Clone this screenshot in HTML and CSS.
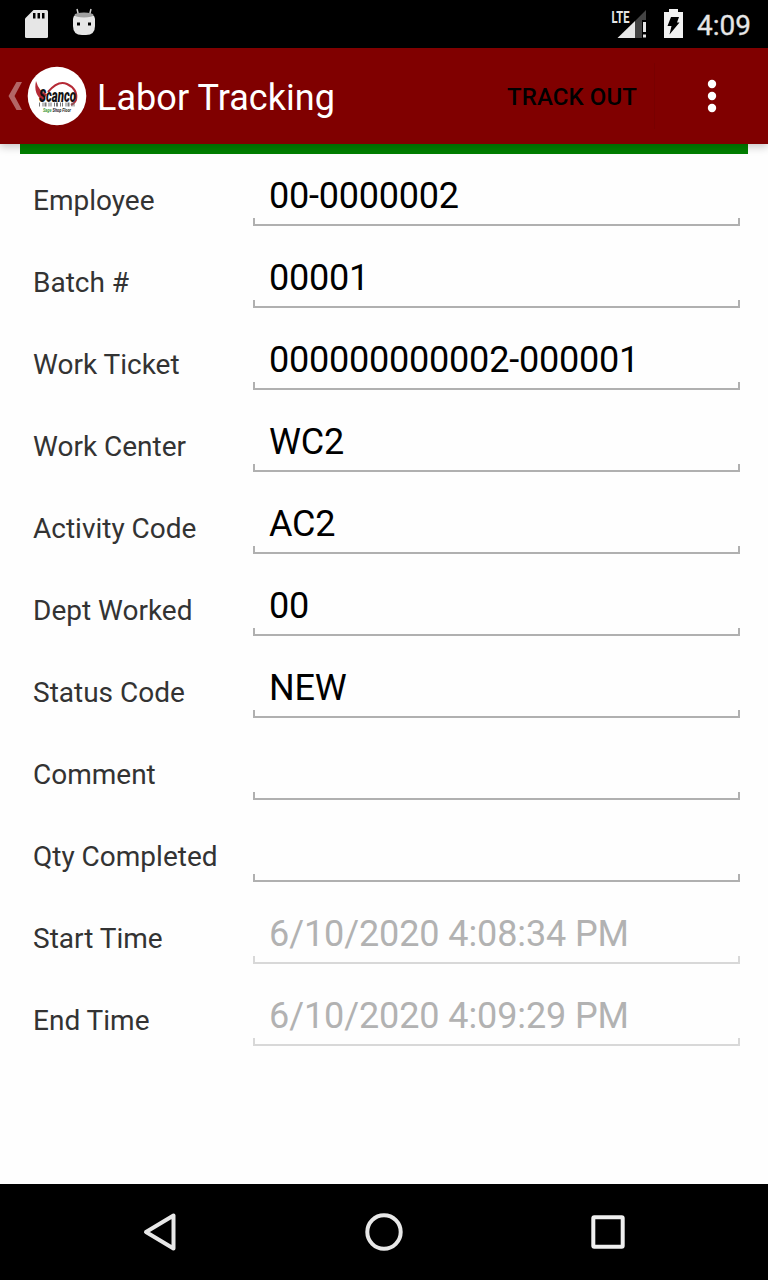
FILE: index.html
```html
<!DOCTYPE html>
<html lang="en">
<head>
    <meta charset="UTF-8">
    <meta name="viewport" content="width=device-width, initial-scale=1.0">
    <title>Labor Tracking</title>
    <link rel="stylesheet" href="styles.css">
</head>
<body>

    <div class="status-bar">
        <div class="status-left">
            <svg width="24" height="30" viewBox="0 0 24 30">
                <path fill="#e6e6e6" d="M8.500 1H21.500Q23 1 23 2.500V27.500Q23 29 21.500 29H1.500Q0 29 0 27.500V9.500Z"/>
                <path fill="#000" d="M8 4h2.500v5.500H8zM12.500 4H15v5.500h-2.500zM17 4h2.500v5.500H17z"/>
            </svg>
            <svg width="24" height="30" viewBox="0 0 24 30">
                <path d="M5 0l1.500 6M19 0l-1.500 6" stroke="#cfcfcf" stroke-width="1.500"/>
                <path fill="#e6e6e6" d="M1 10Q1 4 12 4T23 10V17Q23 26 14 26H10Q1 26 1 17Z"/>
                <ellipse cx="12" cy="6" rx="9.500" ry="2.500" fill="#a0a0a0"/>
                <path fill="#000" d="M5 13.500h3v3H5zM16 13.500h3v3h-3z"/>
            </svg>
        </div>
        <div class="status-right">
            <svg width="38" height="30" viewBox="0 0 38 30">
                <path fill="#444" d="M35 1V11H31V29H24V12Z"/>
                <path fill="#e6e6e6" d="M6.500 29L24 12V29Z"/>
                <path fill="#e6e6e6" d="M32 13h3v10h-3zM32 25.500h3v3h-3z"/>
                <text class="lte" x="0.500" y="13.500" textLength="18" lengthAdjust="spacingAndGlyphs">LTE</text>
            </svg>
            <svg class="battery" width="19" height="30" viewBox="0 0 19 30">
                <path fill="#f2f2f2" d="M5 0h9v3h5v26H0V3h5z"/>
                <path fill="#000" d="M7 8h8l-2 5.500h2.500L5.500 25.500l2-8.500H3.500z"/>
            </svg>
            <span class="clock">4:09</span>
        </div>
    </div>

    <div class="app-bar">
        <svg class="back" width="14" height="30" viewBox="0 0 14 30">
            <path fill="#b36666" d="M8.500 1H14L6.500 15L14 29H8.500L0.500 15Z"/>
        </svg>
        <svg class="logo" width="60" height="60" viewBox="0 0 60 60">
            <circle cx="30" cy="30" r="29.300" fill="#fff"/>
            <path fill="#b52a36" d="M9 15Q12 26 20 28L16 35Q6 28 9 15Z"/>
            <path d="M21 26Q31 14 40 18Q51 23 49 34Q48 37 44 39" fill="none" stroke="#b52a36" stroke-width="2"/>
            <text class="logo-name" x="12" y="35.500" textLength="37" lengthAdjust="spacingAndGlyphs">Scanco</text>
            <path d="M12 38.500H49" stroke="#777" stroke-width="4" stroke-dasharray="1 2.500 1 1 2 2 1 1"/>
            <text class="logo-tag" x="16" y="45.500" textLength="28" lengthAdjust="spacingAndGlyphs"><tspan fill="#3b9a3b">Sage</tspan> Shop Floor</text>
        </svg>
        <h1 class="title">Labor Tracking</h1>
        <div class="action">TRACK OUT</div>
        <svg class="menu" width="10" height="34" viewBox="0 0 10 34">
            <circle cx="5" cy="5" r="4.200" fill="#fff"/>
            <circle cx="5" cy="17" r="4.200" fill="#fff"/>
            <circle cx="5" cy="29" r="4.200" fill="#fff"/>
        </svg>
    </div>

    <div class="content">
        <div class="green-line"></div>
        <div class="row">
            <div class="label">Employee</div>
            <div class="field">00-0000002</div>
        </div>
        <div class="row">
            <div class="label">Batch #</div>
            <div class="field">00001</div>
        </div>
        <div class="row">
            <div class="label">Work Ticket</div>
            <div class="field">000000000002-000001</div>
        </div>
        <div class="row">
            <div class="label">Work Center</div>
            <div class="field">WC2</div>
        </div>
        <div class="row">
            <div class="label">Activity Code</div>
            <div class="field">AC2</div>
        </div>
        <div class="row">
            <div class="label">Dept Worked</div>
            <div class="field">00</div>
        </div>
        <div class="row">
            <div class="label">Status Code</div>
            <div class="field">NEW</div>
        </div>
        <div class="row">
            <div class="label">Comment</div>
            <div class="field"></div>
        </div>
        <div class="row">
            <div class="label">Qty Completed</div>
            <div class="field"></div>
        </div>
        <div class="row">
            <div class="label">Start Time</div>
            <div class="field disabled">6/10/2020 4:08:34 PM</div>
        </div>
        <div class="row">
            <div class="label">End Time</div>
            <div class="field disabled">6/10/2020 4:09:29 PM</div>
        </div>
    </div>

    <div class="nav-bar">
        <svg width="40" height="40" viewBox="0 0 40 40">
            <path d="M6 20L33.500 3.500V36.500Z" fill="none" stroke="#e8e8e8" stroke-width="4" stroke-linejoin="round"/>
        </svg>
        <svg width="40" height="40" viewBox="0 0 40 40">
            <circle cx="20" cy="20" r="16.700" fill="none" stroke="#e8e8e8" stroke-width="4"/>
        </svg>
        <svg width="40" height="40" viewBox="0 0 40 40">
            <rect x="5.300" y="5.300" width="29.400" height="29.400" rx="1" fill="none" stroke="#f0f0f0" stroke-width="4"/>
        </svg>
    </div>

</body>
</html>
```
FILE: styles.css
```css
body {
    margin: 0;
    height: 1280px;
    display: flex;
    flex-direction: column;
    font-family: Roboto, sans-serif;
    background-color: #fefefe;
    overflow: hidden;
}

svg {
    display: block;
    flex: none;
    overflow: visible;
}

.status-bar {
    height: 48px;
    display: flex;
    justify-content: space-between;
    align-items: center;
    padding: 0 17px 0 25px;
    box-sizing: border-box;
    background-color: #000;
}

.status-left, .status-right {
    display: flex;
    align-items: center;
}

.status-left {
    gap: 23px;
}

.lte {
    font-size: 17px;
    font-weight: 700;
    fill: #e6e6e6;
}

.battery {
    margin-left: 15px;
}

.clock {
    margin-left: 14px;
    font-size: 28px;
    line-height: 48px;
    font-weight: 400;
    color: #e6e6e6;
    padding-top: 3px;
    -webkit-text-stroke: 0.3px #e6e6e6;
}

.app-bar {
    position: relative;
    height: 96px;
    display: flex;
    align-items: center;
    box-sizing: border-box;
    padding: 0 51px 0 8px;
    background-color: #800000;
    box-shadow: 0 3px 8px rgba(0,0,0,0.22);
}

.logo {
    margin-left: 5px;
}

.logo-name {
    font-size: 18px;
    font-weight: 900;
    font-style: italic;
    fill: #111;
}

.logo-tag {
    font-size: 5px;
    font-weight: bold;
    font-style: italic;
    fill: #222;
}

.title {
    margin: 3px 0 0 10px;
    font-size: 36px;
    font-weight: 400;
    letter-spacing: 0.05px;
    color: #fff;
}

.action {
    margin-left: auto;
    padding: 2px 17px 0 0;
    border-right: 1px solid #780000;
    font-size: 24px;
    line-height: 64px;
    font-weight: 500;
    letter-spacing: 0.1px;
    color: #000;
}

.menu {
    margin-left: 52px;
}

.content {
    flex: 1;
}

.green-line {
    height: 10px;
    margin: 0 20px;
    background-color: #008000;
}

.row {
    height: 72px;
    margin-bottom: 10px;
    display: flex;
    padding: 0 28px 0 33px;
}

.label {
    width: 220px;
    padding-top: 30px;
    font-size: 28px;
    line-height: 33px;
    color: #333;
}

/* bottom line with a short tick at each end */
.field {
    flex: 1;
    box-sizing: border-box;
    padding: 21px 0 0 16px;
    font-size: 36px;
    line-height: 42px;
    letter-spacing: -0.22px;
    color: #000;
    background-image: linear-gradient(#b0b0b0, #b0b0b0), linear-gradient(#b0b0b0, #b0b0b0), linear-gradient(#b0b0b0, #b0b0b0);
    background-size: 100% 2px, 2px 8px, 2px 8px;
    background-position: left bottom, left bottom, right bottom;
    background-repeat: no-repeat;
}

.disabled {
    color: #b2b2b2;
    letter-spacing: -0.1px;
    background-image: linear-gradient(#d8d8d8, #d8d8d8), linear-gradient(#d8d8d8, #d8d8d8), linear-gradient(#d8d8d8, #d8d8d8);
}

.nav-bar {
    height: 96px;
    display: flex;
    justify-content: center;
    align-items: center;
    gap: 184px;
    background-color: #000;
}
```
